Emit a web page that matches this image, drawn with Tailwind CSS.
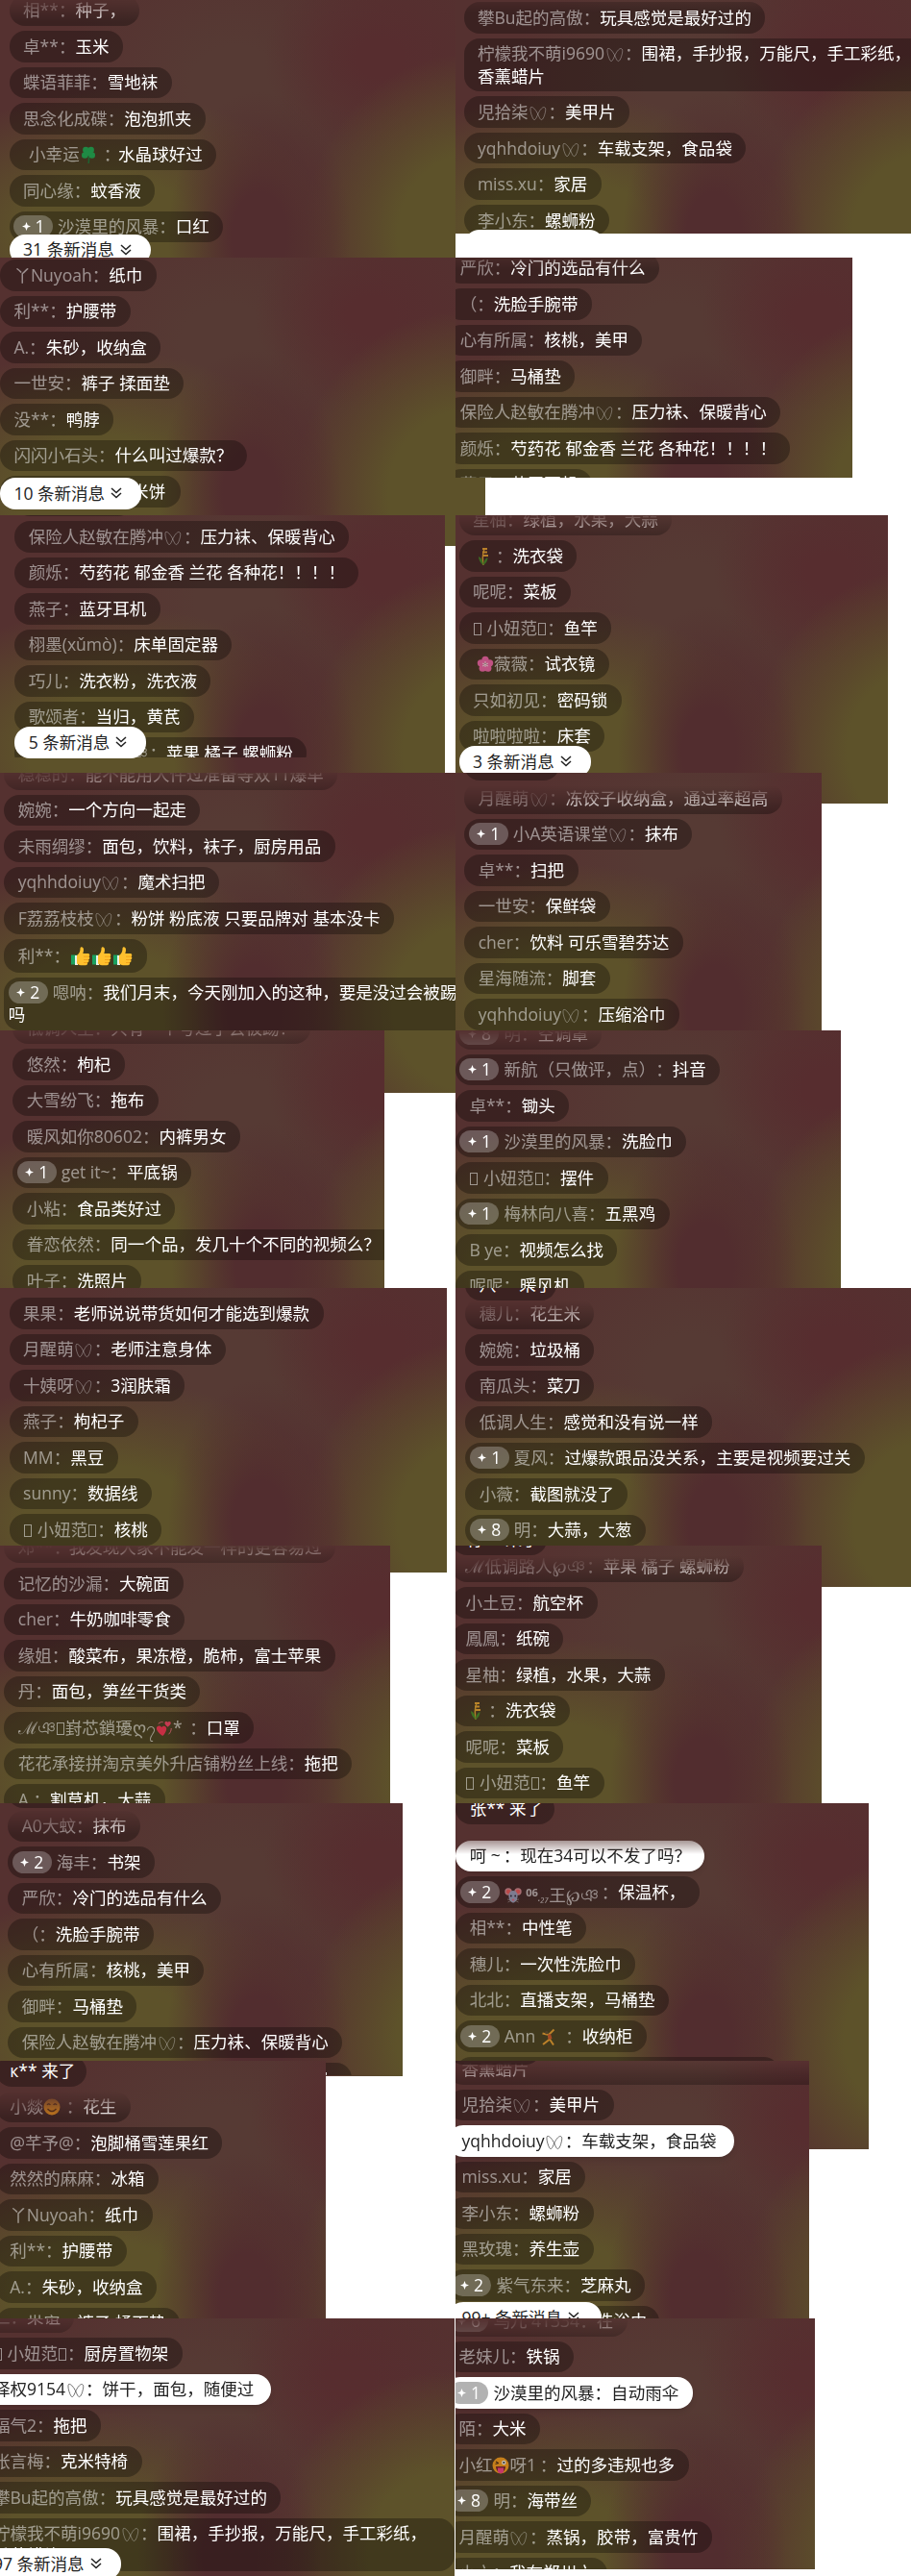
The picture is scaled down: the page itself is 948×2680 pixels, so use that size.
<!DOCTYPE html>
<html lang="zh-CN">
<head>
<meta charset="utf-8">
<title>直播弹幕</title>
<script src="https://cdn.jsdelivr.net/npm/@tailwindcss/browser@4"></script>
</head>
<body class="bg-white overflow-x-hidden">
<svg class="hidden">
  <symbol id="x" viewBox="0 0 18 18"><path d="M1.500 2.500C4 1.500 8 7.500 9.500 11.500C11.500 16.500 13 17 15 12.500C17 7 17.300 3.500 15.800 2.700C13 1.500 9.500 7.500 8 11.500C6 16.500 4.500 17 2.800 12.500C1 8 .5 3.500 1.500 2.500Z" fill="none" stroke="currentColor" stroke-width=".8"/></symbol>
  <symbol id="clover" viewBox="0 0 18 18"><path d="M9 9C9.500 13 10 15 9 18" stroke="#0f7a3a" stroke-width="1.500" fill="none"/><g fill="#12b155"><circle cx="6.300" cy="4" r="3.200"/><circle cx="11.700" cy="4" r="3.200"/><circle cx="5.300" cy="9.500" r="3.300"/><circle cx="12.700" cy="9.500" r="3.300"/><circle cx="9" cy="7" r="3"/></g></symbol>
  <symbol id="grain" viewBox="0 0 18 18"><path d="M9 18C8 12 8 6 10 1" stroke="#e0a52e" stroke-width="1.500" fill="none"/><path d="M8 1h5M8 4.500h5M9 8h5" stroke="#f0a92e" stroke-width="2.200"/><path d="M9 18C6 16 4 12 4 9C7 10 8.500 13 9 18C9 14 11 11 13.500 10C13.500 13 12 16 9 18" fill="#3c8c24"/></symbol>
  <symbol id="flower" viewBox="0 0 18 18"><g fill="#f763ae"><circle cx="9" cy="4.300" r="3.600"/><circle cx="4.400" cy="7.800" r="3.600"/><circle cx="13.600" cy="7.800" r="3.600"/><circle cx="6.200" cy="13.200" r="3.600"/><circle cx="11.800" cy="13.200" r="3.600"/></g><path d="M9 6v6M6 8l6 3M12 8l-6 3" stroke="#ffe0ee" stroke-width="1"/></symbol>
  <symbol id="thumb" viewBox="0 0 22 22"><path d="M1 9.500h6v10H1z" fill="#19a15f"/><path d="M5 10h3v10H5z" fill="#e8f3ea"/><path d="M7 10C10 8 10.500 5 10.500 2.500C11 .5 14 1 14 4C14 6 13.500 7 13.300 8H18.500C20.500 8 20.800 10.500 19.500 11.200C20.800 12 20.500 14 19 14.500C20 15.500 19.500 17.200 18 17.500C18.500 19 17.500 20.200 16 20.200H11C9 20.200 8 19 7 18.500Z" fill="#ffc02e"/><path d="M14 11.200h5.500M14 14.500h5M14 17.500h4" stroke="#ee9a17" stroke-width=".8"/></symbol>
  <symbol id="hearts" viewBox="0 0 20 20"><path d="M8 19C3 15 1 12.500 1 10C1 7 5 6 7 9C9 6 13 7.500 12.500 11C12 14 10 17 8 19Z" fill="#ff2b55"/><path d="M14 8.500C11 6 10.500 5 10.500 3.500C10.800 2 13 1.500 14 3C15.500 1.200 18 2.500 17.500 4.500C17 6 15.500 7.500 14 8.500Z" fill="#ff3d67"/><path d="M3 5C5 3 7 2.500 8.500 3M18 10C18 13 17 15 15 17" stroke="#ff6a8a" fill="none"/></symbol>
  <symbol id="rat" viewBox="0 0 18 18"><circle cx="4" cy="5" r="3.700" fill="#d58a92"/><circle cx="14" cy="5" r="3.700" fill="#d58a92"/><circle cx="4" cy="5" r="2.200" fill="#f25b5b"/><circle cx="14" cy="5" r="2.200" fill="#f25b5b"/><path d="M9 4C13 4 14 8 13.500 11C13 14 11 16.500 9 16.500S5 14 4.500 11C4 8 5 4 9 4Z" fill="#9aa2bf"/><circle cx="6.800" cy="9.500" r=".9" fill="#223"/><circle cx="11.200" cy="9.500" r=".9" fill="#223"/><circle cx="9" cy="13.500" r="1.100" fill="#f0607a"/><path d="M3 13l3 .5M15 13l-3 .5M3.500 16l3-1.500M14.500 16l-3-1.500" stroke="#ccc" stroke-width=".5"/></symbol>
  <symbol id="gym" viewBox="0 0 18 18"><path d="M2.500 5.500L9 7L14.500 1.500M9 7L10 11.500L3 17M10 11.500L14 17.500" stroke="#f0a030" stroke-width="2" fill="none"/><path d="M8 6.500l3-.5l1.500 5l-4 1z" fill="#d0522a"/><circle cx="6.800" cy="4.600" r="1.700" fill="#5a4630"/></symbol>
  <symbol id="smile" viewBox="0 0 18 18"><circle cx="9" cy="9" r="8.500" fill="#ff9f1a"/><path d="M4 7q1.700-2.500 3.400 0M10.600 7q1.700-2.500 3.400 0M4.500 11q4.500 5 9 0" stroke="#5b2f0b" stroke-width="1.300" fill="none"/></symbol>
  <symbol id="wink" viewBox="0 0 18 18"><circle cx="9" cy="9" r="8.500" fill="#ffa21a"/><path d="M3.500 7.500L7 6.500M4 5L6.500 6.500" stroke="#4a2a10" stroke-width="1.200"/><circle cx="12.300" cy="6" r="2.200" fill="#fff"/><circle cx="12.300" cy="6" r="1" fill="#222"/><path d="M4 10h10c0 3.500-2 6.500-5 6.500S4 13.500 4 10Z" fill="#7a1f2a"/><path d="M6 11.500h6v3.500c0 3-6 3-6 0Z" fill="#ff3d8b"/></symbol>
  <symbol id="star" viewBox="0 0 10 10"><path d="M5 0L6.400 3.600L10 5L6.400 6.400L5 10L3.600 6.400L0 5L3.600 3.600Z" fill="#fff"/></symbol>
  <symbol id="down" viewBox="0 0 12 12"><path d="M1 1L6 5.500L11 1M1 6L6 10.500L11 6" fill="none" stroke="#222" stroke-width="1.500"/></symbol>
</svg>
<main id="wall" class="grid h-[2680px] w-[948px] grid-cols-[474px_474px] auto-rows-[268px] overflow-hidden font-['Open_Sans','Noto_Sans_CJK_SC',sans-serif] text-[17.55px] leading-[23.2px]"></main>
<script>
// Message: [name, text, {b: badge, hi: highlighted, nw: name width, w: pill width}]
const X='{x}', T='{t}';
const panels=[
 {w:474,h:268,l:9.7,t:-5.5,f:-4,m:[['相**','种子，'],['卓**','玉米'],['蝶语菲菲','雪地袜'],['思念化成碟','泡泡抓夹'],['<span class="inline-block w-[6px]"></span>小幸运{clover}<span class="inline-block w-[7px]"></span>','水晶球好过',{nw:99}],['同心缘','蚊香液'],['沙漠里的风暴','口红',{b:1}]],n:['31',243.7,147]},
 {w:474,h:243,l:8.5,t:2.2,f:-14,m:[['攀Bu起的高傲','玩具感觉是最好过的'],['柠檬我不萌i9690'+X,'围裙，手抄报，万能尺，手工彩纸，<br>香薰蜡片',{w:490}],['児拾柒'+X,'美甲片'],['yqhhdoiuy'+X,'车载支架，食品袋'],['miss.xu','家居'],['李小东','螺蛳粉']],n:['99+',239,146]},
 {w:505,h:300,l:0,t:2,f:-30,m:[['丫Nuyoah','纸巾'],['利**','护腰带'],['A.','朱砂，收纳盒'],['一世安','裤子 揉面垫'],['没**','鸭脖'],['闪闪小石头','什么叫过爆款？'],['粘豆包包儿','玉米饼',{w:188}]],n:['10',229,147]},
 {w:413,h:229,l:-9.7,t:-5.5,f:-14,m:[['严欣','冷门的选品有什么'],['（','洗脸手腕带'],['心有所属','核桃，美甲'],['御畔','马桶垫'],['保险人赵敏在腾冲'+X,'压力袜、保暖背心'],['颜烁','芍药花 郁金香 兰花 各种花！！！！'],['燕子','蓝牙耳机']]},
 {w:463,h:268,l:15.3,t:6,f:-30,clip:252,j:['',124,1],m:[['保险人赵敏在腾冲'+X,'压力袜、保暖背心'],['颜烁','芍药花 郁金香 兰花 各种花！！！！'],['燕子','蓝牙耳机'],['栩墨(xǔmò)','床单固定器'],['巧儿','洗衣粉，洗衣液'],['歌颂者','当归，黄芪'],['ℳ低调路人℘ঞ','苹果 橘子 螺蛳粉',{nw:143.3}]],n:['5',220,137]},
 {w:450,h:300,l:3.6,t:-11.500,f:-2,m:[['星柚','绿植，水果，大蒜'],['&hairsp;{grain}&thinsp;','洗衣袋',{nw:41.500}],['呢呢','菜板'],[T+' 小妞范'+T,'鱼竿'],['<span class="inline-block w-[4px]"></span>{flower}薇薇','试衣镜'],['只如初见','密码锁'],['啦啦啦啦','床套']],n:['3',240,137]},
 {w:474,h:333,l:4.3,t:-14.8,f:-2,m:[['稳稳的','能不能用大件过准备等双11爆单'],['婉婉','一个方向一起走'],['未雨绸缪','面包，饮料，袜子，厨房用品'],['yqhhdoiuy'+X,'魔术扫把'],['F荔荔枝枝'+X,'粉饼 粉底液 只要品牌对 基本没卡'],['利**','{thumb}{thumb}{thumb}'],['嗯呐','我们月末，今天刚加入的这种，要是没过会被踢<br>吗',{b:2,w:490}]]},
 {w:380.5,h:268,l:9.3,t:10,f:14,j:['',99,8],m:[['月醒萌'+X,'冻饺子收纳盒，通过率超高'],['小A英语课堂'+X,'抹布',{b:1}],['卓**','扫把'],['一世安','保鲜袋'],['cher','饮料 可乐雪碧芬达'],['星海随流','脚套'],['yqhhdoiuy'+X,'压缩浴巾']]},
 {w:400,h:268,l:13.3,t:-18.5,f:-4,m:[['低调人生','只有一个号过了会被踢？'],['悠然','枸杞'],['大雪纷飞','拖布'],['暖风如你80602','内裤男女'],['get it~','平底锅',{b:1}],['小粘','食品类好过'],['眷恋依然','同一个品，发几十个不同的视频么？',{w:400}],['叶子','洗照片']]},
 {w:401,h:268,l:0,t:-12.8,f:0,m:[['明','空调罩',{b:8}],['新航（只做评，点）','抖音',{b:1}],['卓**','锄头'],['沙漠里的风暴','洗脸巾',{b:1}],[T+' 小妞范'+T,'摆件'],['梅林向八喜','五黑鸡',{b:1}],['B ye','视频怎么找'],['呢呢','暖风机']]},
 {w:465,h:296,l:9.700,t:10,f:-30,m:[['果果','老师说说带货如何才能选到爆款'],['月醒萌'+X,'老师注意身体'],['十姨呀'+X,'3润肤霜'],['燕子','枸杞子'],['MM','黑豆'],['sunny','数据线'],[T+' 小妞范'+T,'核桃']]},
 {w:474,h:311,l:10.4,t:10.500,f:14,j:['八** 来了',95,13],m:[['穗儿','花生米'],['婉婉','垃圾桶'],['南瓜头','菜刀'],['低调人生','感觉和没有说一样'],['夏风','过爆款跟品没关系，主要是视频要过关',{b:1}],['小薇','截图就没了'],['明','大蒜，大葱',{b:8}]]},
 {w:406,h:268,l:4.4,t:-14.500,f:0,m:[['邓**','我发现大家不能发一样的更容易过',{nw:53}],['记忆的沙漏','大碗面'],['cher','牛奶咖啡零食'],['缘姐','酸菜布，果冻橙，脆柿，富士苹果'],['丹','面包，笋丝干货类'],['ℳঞ'+T+'崶芯鎖瓇ღ၇{hearts}*','口罩',{nw:196}],['花花承接拼淘京美外升店铺粉丝上线','拖把'],['A.','割草机，大蒜']]},
 {w:380.5,h:268,l:-4,t:5.500,f:11,j:['有** 来了',99,10],m:[['ℳ低调路人℘ঞ','苹果 橘子 螺蛳粉',{nw:143.3}],['小土豆','航空杯'],['鳳鳳','纸碗'],['星柚','绿植，水果，大蒜'],['&hairsp;{grain}&thinsp;','洗衣袋',{nw:41.500}],['呢呢','菜板'],[T+' 小妞范'+T,'鱼竿']]},
 {w:419,h:284,l:8.4,t:7.500,f:6,clip:282.5,j:['',97,5],m:[['A0大蚊','抹布'],['海丰','书架',{b:2}],['严欣','冷门的选品有什么'],['（','洗脸手腕带'],['心有所属','核桃，美甲'],['御畔','马桶垫'],['保险人赵敏在腾冲'+X,'压力袜、保暖背心'],['颜烁','芍药花 郁金香 兰花 各种花！！！！']]},
 {w:429.5,h:360,l:.3,t:38.500,f:26,clip:268,j:['张** 来了',102.5,22],m:[['呵 ~ ','现在34可以不发了吗？',{hi:1,nw:52.500}],['{rat} <span class="text-[11px] font-bold align-[5px]">06</span><span class="text-[12px] italic">.₂₇</span>王℘ঞ','保温杯，',{b:2,nw:118.500}],['相**','中性笔'],['穗儿','一次性洗脸巾'],['北北','直播支架，马桶垫'],['Ann {gym}&thinsp;','收纳柜',{b:2,nw:81}],['','',{w:337}]]},
 {w:339,h:268,l:-4.2,t:31.700,f:32,j:['к** 来了',94,27],m:[['小燚{smile}&thinsp;','花生',{nw:76}],['@芊予@','泡脚桶雪莲果红'],['然然的麻麻','冰箱'],['丫Nuyoah','纸巾'],['利**','护腰带'],['A.','朱砂，收纳盒'],['一世安','裤子 揉面垫']]},
 {w:368,h:268,l:-8,t:-31,f:2,j:['',97,4],m:[['柠檬我不萌i9690'+X,'围裙，手抄报<br>香薰蜡片',{w:490}],['児拾柒'+X,'美甲片'],['yqhhdoiuy'+X,'车载支架，食品袋',{hi:1,w:298}],['miss.xu','家居'],['李小东','螺蛳粉'],['黑玫瑰','养生壶'],['紫气东来','芝麻丸',{b:2}],['蝶语菲菲儿','防滑洗浴巾',{w:220}]],n:['99+',251,160]},
 {w:473,h:268,l:-21.5,t:-17.500,f:-4,m:[['仁','柴谊'],[T+' 小妞范'+T,'厨房置物架'],['择权9154'+X,'饼干，面包，随便过',{hi:1,w:303}],['福气2','拖把'],['张言梅','克米特椅'],['攀Bu起的高傲','玩具感觉是最好过的'],['柠檬我不萌i9690'+X,'围裙，手抄报，万能尺，手工彩纸，<br>香薰蜡片',{w:494.5}]],n:['97',239,147]},
 {w:374,h:261,l:-11,t:-13.800,f:0,m:[['乌兀 41334','在',{b:6}],['老妹儿','铁锅'],['沙漠里的风暴','自动雨伞',{b:1,hi:1}],['陌','大米'],['小红{wink}呀1','过的多违规也多',{nw:102}],['明','海带丝',{b:8}],['月醒萌'+X,'蒸锅，胶带，富贵竹'],['小六','我在郑州六']]}
];
const icon=(id)=>{
  if(id==='x')return '<svg class="inline-block size-[18px] mx-[1.5px] align-[-4px] opacity-80"><use href="#x"/></svg>';
  if(id==='t')return '<span class="inline-block h-[13px] w-[8px] mx-px border border-current align-[-1px]"></span>';
  if(id==='thumb')return '<svg class="inline-block size-[22px] align-[-5px]"><use href="#thumb"/></svg>';
  return '<svg class="inline-block size-[18px] align-[-3px] opacity-70"><use href="#'+id+'"/></svg>';
};
const rich=s=>s.replace(/\{(\w+)\}/g,(_,k)=>icon(k));
const pill=([name,text,o={}])=>{
  const tone=o.hi?'bg-white text-[#222] shadow-md':'bg-black/30 text-white';
  const pad=o.b?'pl-[4.4px]':'pl-[14.4px]';
  const badge=o.b?`<span class="mr-[5px] inline-flex h-[23px] w-[41px] items-center justify-center gap-[5px] rounded-full align-top text-white ${o.hi?'bg-black/30':'bg-white/25'}"><svg class="size-[9px]"><use href="#star"/></svg>${o.b}</span>`:'';
  const size=text.includes('thumb')?'h-[34.8px] pt-[5.8px]':'min-h-[32.5px] py-[4.65px]';
  return `<li class="whitespace-nowrap rounded-[16px] pr-[14.4px] ${size} ${pad} ${tone}" style="${o.w?`width:${o.w}px`:''}">${badge}${name?`<span class="inline-block h-[23.2px] align-top ${o.hi?'text-[#222]':'text-white/50'}" style="${o.nw?`width:${o.nw}px`:''}"><span class="flex justify-between"><span>${rich(name)}</span><span>：</span></span></span>`:''}<span>${rich(text)}</span></li>`;
};
document.getElementById('wall').innerHTML=panels.map(p=>`<section class="relative isolate overflow-hidden bg-[#553130]" style="width:${p.w}px;height:${p.h}px">
<div class="absolute inset-y-0 -left-8 -z-10 w-[560px] bg-[radial-gradient(ellipse_95px_150px_at_302px_245px,#522d2f_30%,transparent),radial-gradient(ellipse_180px_190px_at_527px_245px,#5d522a_45%,transparent),radial-gradient(ellipse_230px_150px_at_147px_245px,#5d522a_40%,transparent),radial-gradient(ellipse_120px_100px_at_427px_60px,#572d2f_20%,transparent),radial-gradient(ellipse_190px_170px_at_277px_90px,#563a34_25%,transparent)]" style="transform:translateX(${p.l-9.7}px)"></div>
<div class="h-full overflow-hidden" style="height:${p.clip||p.h}px;-webkit-mask-image:linear-gradient(transparent ${p.f}px,#000 ${p.f+27}px);mask-image:linear-gradient(transparent ${p.f}px,#000 ${p.f+27}px)"><ul class="flex flex-col items-start gap-[5px]" style="margin-top:${p.t}px;margin-left:${p.l}px">${p.m.map(pill).join('')}</ul></div>
${p.j?`<div class="absolute h-[32.5px] whitespace-nowrap rounded-[16px] bg-black/30 py-[4.65px] pl-[14.4px] text-white" style="left:${p.l}px;width:${p.j[1]}px;top:${p.j[2]-32.5}px">${p.j[0]}</div>`:''}
${p.n?`<div class="absolute flex h-[32.5px] items-center gap-[6px] whitespace-nowrap rounded-[16px] bg-white pl-[14.4px] text-[#222]" style="left:${p.l}px;width:${p.n[2]}px;top:${p.n[1]}px"><span>${p.n[0]} 条新消息</span><svg class="size-[12px]"><use href="#down"/></svg></div>`:''}
</section>`).join('');
</script>
</body>
</html>
